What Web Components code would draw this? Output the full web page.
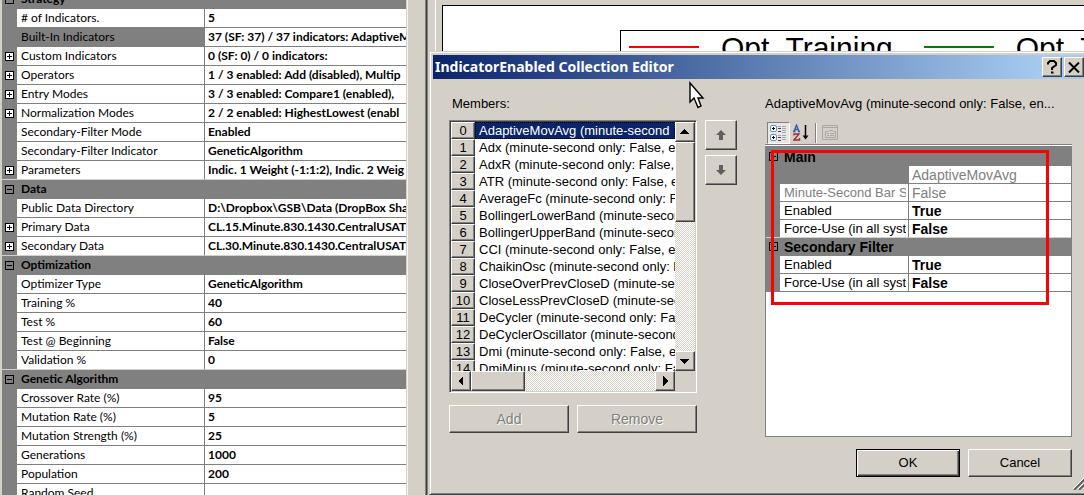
<!DOCTYPE html>
<html lang="en">
<head>
<meta charset="utf-8">
<title>IndicatorEnabled Collection Editor</title>
<style>
html, body { height: 100%; margin: 0; }
body { overflow: hidden; background: #d4d0c8; color: #000; font: 13px/16px "Liberation Sans", sans-serif; }
</style>
</head>
<body>
<strategy-app></strategy-app>

<script>
const raised = 'border: 1px solid; border-color: #fff #404040 #404040 #fff; box-shadow: inset -1px -1px #808080;';

class PropertyGrid extends HTMLElement {
  set groups(groups) {
    const root = this.shadowRoot || this.attachShadow({ mode: 'open' });
    const toggle = (kind, label) =>
      `<button class="${kind}" aria-label="${kind === 'plus' ? 'Expand' : 'Collapse'} ${label}"><svg width="7" height="7" viewBox="0 0 7 7" shape-rendering="crispEdges"><path d="M1 3h5v1H1z${kind === 'plus' ? 'M3 1h1v5H3z' : ''}"/></svg></button>`;
    const body = groups.map(g => `
      <tr class="cat"><td class="gut">${toggle('minus', g.name)}</td><th colspan="2" scope="rowgroup">${g.name}</th></tr>
      ${g.rows.map(([name, value, flags = '']) => `
      <tr class="${flags}"><td class="gut">${flags.includes('more') ? toggle('plus', name) : ''}</td><th scope="row"><div>${name}</div></th><td class="val"><div>${value}</div></td></tr>`).join('')}`).join('');
    root.innerHTML = `
      <style>
        :host { display: block; background: #fff; overflow: hidden; }
        table { width: 100%; table-layout: fixed; border-collapse: separate; border-spacing: 0; }
        .c1 { width: var(--gutter, 15px); } .c2 { width: var(--name, 188px); }
        td, th { box-sizing: border-box; height: var(--row, 19px); padding: 0 0 0 4px; overflow: hidden;
          white-space: nowrap; text-align: left; font-weight: normal; line-height: 16px;
          border-bottom: 1px solid #808080; }
        th { background: #fff; padding-right: 2px; }
        div { overflow: hidden; }
        tr:not(.cat) th { border-right: 1px solid #808080; font-size: var(--name-size, 12px); }
        .gut { padding: 0; background: #808080; text-align: center; line-height: 0; }
        .cat td, .cat th { background: #808080; font-weight: bold; }
        .val { padding-left: 3px; font-weight: bold; }
        tr:has(+ .cat) td, tr:has(+ .cat) th { border-bottom-color: #d4d0c8; }
        .sel th { background: #808080; }
        .off th, .off .val { color: #808080; font-weight: normal; }
        button { width: 9px; height: 9px; padding: 0; border: 1px solid #000; background: #fff; line-height: 0;
          display: inline-block; vertical-align: middle; }
        .minus { background: #808080; }
        svg { display: block; }
      </style>
      <table><colgroup><col class="c1"><col class="c2"><col></colgroup><tbody>${body}</tbody></table>`;
  }
}
customElements.define('property-grid', PropertyGrid);

/* Raised push button. */
class PushButton extends HTMLElement {
  connectedCallback() {
    const off = this.hasAttribute('disabled');
    this.attachShadow({ mode: 'open' }).innerHTML = `
      <style>
        :host { display: block; }
        button { box-sizing: border-box; width: 100%; height: 100%; padding: 0; display: flex; align-items: center;
          justify-content: center; font: inherit; color: #000; background: #d4d0c8; ${raised} }
        button:disabled { color: #808080; text-shadow: 1px 1px #fff; }
        :host([default]) button { border-color: #000; box-shadow: inset 1px 1px #fff, inset -1px -1px #404040, inset -2px -2px #808080; }
      </style>
      <button ${off ? 'disabled' : ''} ${this.hasAttribute('label') ? `aria-label="${this.getAttribute('label')}"` : ''}><slot></slot></button>`;
  }
}
customElements.define('push-button', PushButton);

/* Scroll bar with arrow buttons and a thumb. */
class ScrollBar extends HTMLElement {
  connectedCallback() {
    const v = this.hasAttribute('vertical');
    const arrow = d => `<svg width="10" height="10" viewBox="0 0 10 10" shape-rendering="crispEdges"><path d="${d}"/></svg>`;
    this.attachShadow({ mode: 'open' }).innerHTML = `
      <style>
        :host { display: flex; flex-direction: ${v ? 'column' : 'row'};
          background: repeating-conic-gradient(#fff 0 25%, #d4d0c8 0 50%) 0 0 / 2px 2px; }
        push-button { flex: none; width: 20px; height: 20px; }
        .track { flex: 1; display: flex; flex-direction: inherit; min-width: 0; min-height: 0; }
        .thumb { box-sizing: border-box; flex: 0 0 var(--thumb); background: #d4d0c8; ${raised} }
        svg { display: block; }
      </style>
      <push-button label="Back">${arrow(v ? 'M0 7h9L4.5 2z' : 'M7 0v10L2 5z')}</push-button>
      <div class="track"><div class="thumb"></div></div>
      <push-button label="Forward">${arrow(v ? 'M0 3h9L4.5 8z' : 'M3 0v10L8 5z')}</push-button>`;
  }
}
customElements.define('scroll-bar', ScrollBar);

/* Numbered list of the collection's members. */
class MemberList extends HTMLElement {
  connectedCallback() {
    const names = ['AdaptiveMovAvg', 'Adx', 'AdxR', 'ATR', 'AverageFc', 'BollingerLowerBand', 'BollingerUpperBand', 'CCI',
      'ChaikinOsc', 'CloseOverPrevCloseD', 'CloseLessPrevCloseD', 'DeCycler', 'DeCyclerOscillator', 'Dmi', 'DmiMinus'];
    this.attachShadow({ mode: 'open' }).innerHTML = `
      <style>
        :host { box-sizing: border-box; display: grid; grid-template: minmax(0, 1fr) 20px / minmax(0, 1fr) 20px;
          border: 1px solid; border-color: #808080 #fff #fff #808080; padding: 1px; box-shadow: inset 1px 1px #404040; }
        ul { margin: 0; padding: 0; list-style: none; background: #fff; overflow: hidden; }
        li { display: flex; height: 17px; line-height: 17px; white-space: nowrap; }
        .n { box-sizing: border-box; flex: 0 0 24px; height: 17px; line-height: 15px; text-align: center;
          background: #d4d0c8; ${raised} }
        .t { flex: 1; min-width: 0; padding-left: 4px; overflow: hidden; }
        [aria-selected=true] .t { background: #0a246a; color: #fff; outline: 1px dotted #000; outline-offset: -1px; }
        .v { --thumb: 80px; } .h { --thumb: 54px; }
      </style>
      <ul role="listbox" aria-label="Members">${names.map((n, i) => `<li role="option" aria-selected="${i === 0}"><span class="n">${i}</span><span class="t">${n} (minute-second${i ? ' only: False, en' : ''}</span></li>`).join('')}</ul>
      <scroll-bar class="v" vertical></scroll-bar>
      <scroll-bar class="h"></scroll-bar>`;
  }
}
customElements.define('member-list', MemberList);

/* Categorized / alphabetical / property-page tool strip. */
class GridToolbar extends HTMLElement {
  connectedCallback() {
    this.attachShadow({ mode: 'open' }).innerHTML = `
      <style>
        :host { display: flex; padding: 2px 2px 0; border-bottom: 1px solid #808080; box-shadow: 0 1px #fff; margin-bottom: 1px; }
        button { box-sizing: border-box; width: 23px; height: 22px; padding: 1px 2px; border: 1px solid transparent; background: none; }
        .on { border-color: #808080 #fff #fff #808080; background: #e9e7e3; }
        i { width: 1px; margin: 1px 2px 1px 2px; background: #808080; border-right: 1px solid #fff; }
        svg { display: block; }
      </style>
      <button class="on" aria-label="Categorized"><svg width="17" height="18" viewBox="0 0 17 18">
        <g fill="#fff" stroke="#5b93c9"><rect x=".5" y="1.5" width="6" height="6" rx="1.5"/><rect x=".5" y="10.5" width="6" height="6" rx="1.5"/></g>
        <path d="M2 4h3v1H2zM3 3h1v3H3zM2 13h3v1H2zM3 12h1v3H3z"/>
        <path d="M8 4.500h3M8 7.500h3M8 13.500h3M8 16.500h3" stroke="#444"/>
        <path d="M8 2.500h3M12 2.500h4M12 4.500h4M12 6.500h4M12 8.500h4M8 11.500h3M12 11.500h4M12 13.500h4M12 15.500h4" stroke="#a3a6ae"/></svg></button>
      <button aria-label="Alphabetical"><svg width="17" height="18" viewBox="0 0 17 18" fill="none">
        <path d="M1 7.500L3.500 1 6 7.500M2 5.500h3M0 7.500h2.500M5 7.500h2" stroke="#2f55b5" stroke-width="1.300"/>
        <path d="M1 11.500V10h5l-5 6h5.500v-2" stroke="#a02c35" stroke-width="1.400"/>
        <path d="M12.500 1v13" stroke="#000" stroke-width="1.500"/><path d="M9.500 11.500h6l-3 4z" fill="#000"/></svg></button>
      <i></i>
      <button disabled aria-label="Property Pages"><svg width="17" height="18" viewBox="0 0 17 18" fill="none" stroke="#aaa79f">
        <path d="M.5 1.500h15v14H.5zM1 3.500h15M3.500 13.500v-6h3l1-1h3l1 1h2v6zM5 9.500h2M8 9.500h4M5 11.500h2M8 11.500h4"/></svg></button>`;
  }
}
customElements.define('grid-toolbar', GridToolbar);

/* Chart panel behind the dialog, with its legend. */
class ChartPanel extends HTMLElement {
  connectedCallback() {
    this.attachShadow({ mode: 'open' }).innerHTML = `
      <style>
        :host { display: block; overflow: hidden; padding: 5px 0 0 6px; border-left: 1px solid #fff; }
        .plot { height: 100%; background: #fff; border: 1px solid #000; border-right: 0; padding: 24px 0 0 177px; }
        .legend { display: flex; align-items: flex-start; height: 60px; border: 1px solid #000; border-right: 0;
          padding-left: 8px; font-size: 30px; line-height: 34px; white-space: nowrap; }
        i { flex: 0 0 70px; height: 2px; margin: 15px 22px 0 0; background: var(--c); }
        span { flex: none; margin-right: 31px; }
      </style>
      <div class="plot"><div class="legend"><i style="--c:#f00"></i><span>Opt. Training</span><i style="--c:#008000"></i><span>Opt. Test</span></div></div>`;
  }
}
customElements.define('chart-panel', ChartPanel);

/* The floating collection editor window. */
class CollectionEditor extends HTMLElement {
  connectedCallback() {
    const root = this.attachShadow({ mode: 'open' });
    root.innerHTML = `
      <style>
        :host { box-sizing: border-box; display: flex; flex-direction: column; background: #d4d0c8; padding: 3px;
          border: 1px solid; border-color: #d4d0c8 #404040 #404040 #d4d0c8; box-shadow: inset 1px 1px #fff, inset -1px -1px #808080; }
        header { display: flex; align-items: center; height: 24px; padding: 0 4px 0 2px; gap: 2px; color: #fff;
          background: linear-gradient(90deg, #0a246a, #a6caf0 93%); }
        h1 { flex: 1; margin: 0; font: bold 14px/24px "Noto Sans", sans-serif; white-space: nowrap; }
        header push-button { width: 20px; height: 20px; }
        main { flex: 1; min-height: 0; display: grid; grid-template-columns: minmax(0, 288fr) minmax(0, 307fr); column-gap: 28px; padding: 16px 16px 0; }
        section { display: flex; flex-direction: column; min-height: 0; }
        h2 { margin: 0 0 8px; font-size: 13px; font-weight: normal; line-height: 17px; white-space: nowrap; overflow: hidden; text-overflow: ellipsis; }
        .left h2 { padding-left: 3px; }
        .members { flex: 1; min-height: 0; display: grid; grid-template: minmax(0, 1fr) 28px / minmax(0, 1fr) 32px; gap: 12px 8px; padding-bottom: 4px; }
        .move { display: grid; grid-auto-rows: 30px; gap: 5px; }
        .pair { display: grid; grid-template-columns: 1fr 1fr; gap: 8px; font-size: 14px; }
        .box { flex: 1; min-height: 0; border: 1px solid #808080; background: #fff; position: relative; font-size: 14px; }
        property-grid { --gutter: 14px; --name: 129px; --row: 18px; --name-size: 13px; border-top: 1px solid #808080; }
        .mark { position: absolute; left: 5px; top: 3px; width: 272px; height: 149px; border: 3px solid #f00; }
        footer { display: flex; justify-content: flex-end; gap: 8px; padding: 12px 16px 14px; }
        footer push-button { width: 104px; height: 28px; }
        .grip { position: absolute; right: 4px; bottom: 4px; }
        svg { display: block; }
      </style>
      <header><h1>IndicatorEnabled Collection Editor</h1>
        <push-button label="Help"><svg width="10" height="14" viewBox="0 0 10 14" fill="none" stroke="#000" stroke-width="2"><path d="M1 4.500V3l2-2h4l2 2v2L5 8v2M4 12.500h2.500"/></svg></push-button>
        <push-button label="Close"><svg width="12" height="11" viewBox="0 0 12 11" fill="none" stroke="#000" stroke-width="2"><path d="M1 .5l10 10M11 .5l-10 10"/></svg></push-button></header>
      <main>
        <section class="left"><h2>Members:</h2>
          <div class="members"><member-list></member-list>
            <div class="move">
              <push-button label="Move up"><svg width="10" height="10" viewBox="0 0 10 10" fill="#606060"><path d="M5 0l5 5H7v5H3V5H0z"/></svg></push-button>
              <push-button label="Move down"><svg width="10" height="10" viewBox="0 0 10 10" fill="#606060"><path d="M5 10l5-5H7V0H3v5H0z"/></svg></push-button>
            </div>
            <div class="pair"><push-button disabled>Add</push-button><push-button disabled>Remove</push-button></div>
          </div></section>
        <section><h2>AdaptiveMovAvg (minute-second only: False, en...</h2>
          <grid-toolbar></grid-toolbar>
          <div class="box"><property-grid></property-grid><div class="mark"></div></div></section>
      </main>
      <footer><push-button default>OK</push-button><push-button>Cancel</push-button></footer>
      <svg class="grip" width="14" height="12" viewBox="0 0 14 12" fill="none"><path d="M1 12L13 0M6 12l8-8M11 12l3-3" stroke="#606060" stroke-width="2"/><path d="M0 11L11 0M5 11l9-9M10 11l4-4" stroke="#fff"/></svg>`;
    root.querySelector('property-grid').groups = [
      { name: 'Main', rows: [['', 'AdaptiveMovAvg', 'sel off'], ['Minute-Second Bar S', 'False', 'off'], ['Enabled', 'True'], ['Force-Use (in all syst', 'False']] },
      { name: 'Secondary Filter', rows: [['Enabled', 'True'], ['Force-Use (in all syst', 'False']] }];
  }
}
customElements.define('collection-editor', CollectionEditor);

/* Application window: settings on the left, chart on the right, editor on top. */
class StrategyApp extends HTMLElement {
  connectedCallback() {
    const root = this.attachShadow({ mode: 'open' });
    root.innerHTML = `
      <style>
        :host { display: flex; height: 100vh; position: relative; overflow: hidden; }
        .settings { flex: 0 0 404px; margin: 0 1px 0 2px; font: 12px/16px Lato, sans-serif; overflow: hidden; }
        .settings property-grid { margin-top: -10px; }
        .split { flex: 0 0 17px; border-left: 1px solid #f4f3f0; border-right: 1px solid #808080; box-shadow: 1px 0 #404040, 2px 0 #808080; margin-right: 9px; }
        chart-panel { flex: 1; min-width: 0; }
        collection-editor { position: absolute; left: 429px; right: -8px; top: 51px; bottom: 0; }
        .cursor { position: absolute; left: 689px; top: 81px; }
      </style>
      <div class="settings"><property-grid></property-grid></div>
      <div class="split"></div>
      <chart-panel></chart-panel>
      <collection-editor role="dialog" aria-label="IndicatorEnabled Collection Editor"></collection-editor>
      <svg class="cursor" width="16" height="30" viewBox="0 0 16 30"><path d="M1 2v19l4-4 4 9.500 3-1.500-3-8h5z" fill="#fff" stroke="#000" stroke-width="1.400"/></svg>`;
    root.querySelector('property-grid').groups = [
      { name: 'Strategy', rows: [
        ['# of Indicators.', '5'],
        ['Built-In Indicators', '37 (SF: 37) / 37 indicators: AdaptiveM', 'sel'],
        ['Custom Indicators', '0 (SF: 0) / 0 indicators:', 'more'],
        ['Operators', '1 / 3 enabled: Add (disabled), Multip', 'more'],
        ['Entry Modes', '3 / 3 enabled: Compare1 (enabled),', 'more'],
        ['Normalization Modes', '2 / 2 enabled: HighestLowest (enabl', 'more'],
        ['Secondary-Filter Mode', 'Enabled'],
        ['Secondary-Filter Indicator', 'GeneticAlgorithm'],
        ['Parameters', 'Indic. 1 Weight (-1:1:2), Indic. 2 Weig', 'more']] },
      { name: 'Data', rows: [
        ['Public Data Directory', 'D:\\Dropbox\\GSB\\Data (DropBox Sha'],
        ['Primary Data', 'CL.15.Minute.830.1430.CentralUSAT', 'more'],
        ['Secondary Data', 'CL.30.Minute.830.1430.CentralUSAT', 'more']] },
      { name: 'Optimization', rows: [
        ['Optimizer Type', 'GeneticAlgorithm'], ['Training %', '40'], ['Test %', '60'],
        ['Test @ Beginning', 'False'], ['Validation %', '0']] },
      { name: 'Genetic Algorithm', rows: [
        ['Crossover Rate (%)', '95'], ['Mutation Rate (%)', '5'], ['Mutation Strength (%)', '25'],
        ['Generations', '1000'], ['Population', '200'], ['Random Seed', '']] }];
  }
}
customElements.define('strategy-app', StrategyApp);
</script>
</body>
</html>
